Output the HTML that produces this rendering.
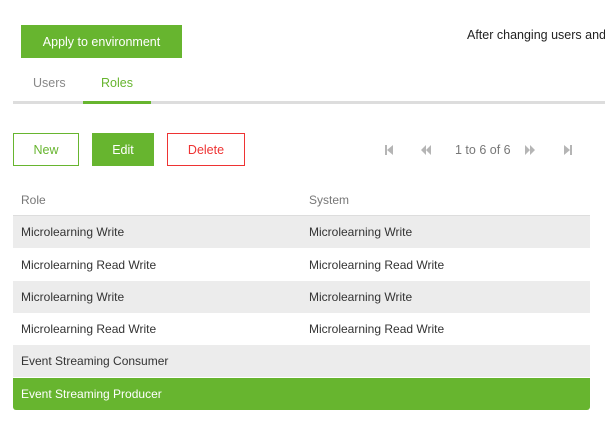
<!DOCTYPE html><html><head><style>
body{margin:0;width:605px;height:429px;background:#fff;font-family:"Liberation Sans",sans-serif;font-size:12px;color:#333;position:relative;overflow:hidden}
.a{position:absolute;white-space:nowrap}
.btn{position:absolute;box-sizing:border-box;display:flex;align-items:center;justify-content:center;font-size:12.5px}
.row{position:absolute;left:13px;width:577px;height:32px;line-height:32px}
.row span{position:absolute}
.c1{left:8px}.c2{left:296px}
.ic{position:absolute;top:145px;width:10px;height:10px;fill:#b5b5b5}
</style></head><body>
<div class="btn" style="left:21px;top:25px;width:161px;height:33px;background:#67b52f;color:#fff;font-size:12.5px">Apply to environment</div>
<div class="a" style="left:467px;top:28px;font-size:12.5px;color:#222">After changing users and</div>
<div class="a" style="left:33px;top:76px;color:#888;font-size:12.5px">Users</div>
<div class="a" style="left:101px;top:76px;color:#67b52f;font-size:12.5px">Roles</div>
<div class="a" style="left:13px;top:101px;width:592px;height:3px;background:#ddd"></div>
<div class="a" style="left:83px;top:101px;width:68px;height:3px;background:#67b52f"></div>
<div class="btn" style="left:13px;top:133px;width:66px;height:33px;border:1px solid #67b52f;color:#67b52f">New</div>
<div class="btn" style="left:92px;top:133px;width:62px;height:33px;background:#67b52f;color:#fff">Edit</div>
<div class="btn" style="left:167px;top:133px;width:78px;height:33px;border:1px solid #e33;color:#e33">Delete</div>
<svg class="ic" style="left:384px" viewBox="0 0 10 10"><rect x="1" y="0" width="2" height="10"/><path d="M9 0L3 5 9 10z"/></svg>
<svg class="ic" style="left:421px" viewBox="0 0 10 10"><path d="M5 0L0 5 5 10zM10 0L5 5 10 10z"/></svg>
<div class="a" style="left:455px;top:143px;color:#777;font-size:12.5px">1 to 6 of 6</div>
<svg class="ic" style="left:525px" viewBox="0 0 10 10"><path d="M0 0L5 5 0 10zM5 0L10 5 5 10z"/></svg>
<svg class="ic" style="left:563px" viewBox="0 0 10 10"><path d="M1 0L7 5 1 10z"/><rect x="7" y="0" width="2" height="10"/></svg>
<div class="row" style="top:184px;color:#777"><span class="c1">Role</span><span class="c2">System</span></div>
<div class="a" style="left:13px;top:215px;width:577px;height:1px;background:#ddd"></div>
<div class="row" style="top:216px;background:#ececec"><span class="c1">Microlearning Write</span><span class="c2">Microlearning Write</span></div>
<div class="row" style="top:249px"><span class="c1">Microlearning Read Write</span><span class="c2">Microlearning Read Write</span></div>
<div class="row" style="top:281px;background:#ececec"><span class="c1">Microlearning Write</span><span class="c2">Microlearning Write</span></div>
<div class="row" style="top:313px"><span class="c1">Microlearning Read Write</span><span class="c2">Microlearning Read Write</span></div>
<div class="row" style="top:345px;background:#ececec"><span class="c1">Event Streaming Consumer</span></div>
<div class="row" style="top:378px;background:#67b52f;color:#fff;border-radius:0 0 3px 3px"><span class="c1">Event Streaming Producer</span></div>
</body></html>
